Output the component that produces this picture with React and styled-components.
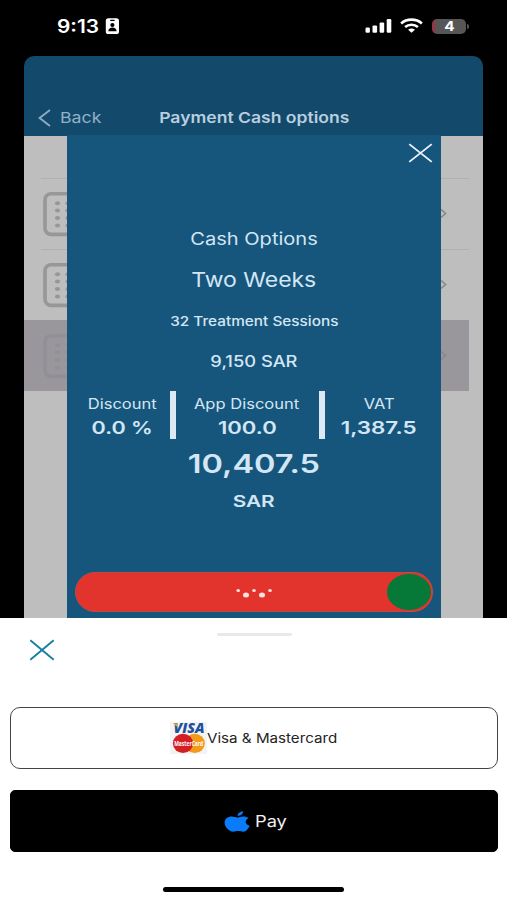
import React from "react";
import styled, { createGlobalStyle } from "styled-components";

const GlobalStyle = createGlobalStyle`
  *, *::before, *::after { box-sizing: border-box; }
  body { margin: 0; background: #000; font-family: Inter, "Liberation Sans", sans-serif; }
  button { font: inherit; border: 0; padding: 0; background: none; }
`;

const Phone = styled.div`
  width: 507px;
  height: 900px;
  overflow: hidden;
  display: flex;
  flex-direction: column;
  background: #000;
`;

const Label = styled.span`
  display: block;
  flex: none;
  white-space: nowrap;
  line-height: ${(p) => p.$line || 20}px;
  font-size: ${(p) => p.$size}px;
  font-weight: ${(p) => p.$weight || 400};
  color: ${(p) => p.$color || "#d3e6f5"};
  transform: scaleX(${(p) => p.$stretch || 1.18});
  transform-origin: ${(p) => p.$origin || "center"};
`;

const StatusBar = styled.header`
  height: 56px;
  flex: none;
  display: flex;
  justify-content: space-between;
  padding: 16px 38px 0 57px;
`;

const StatusGroup = styled.div`
  display: flex;
  align-items: center;
  height: 20px;
`;

const Clock = styled.div`
  width: 48px;
  padding-top: 1px;
`;

const Screen = styled.main`
  height: 562px;
  flex: none;
  margin: 0 24px;
  display: flex;
  flex-direction: column;
  position: relative;
`;

const NavBar = styled.nav`
  height: 80px;
  flex: none;
  display: grid;
  grid-template-columns: 135px 190px 1fr;
  padding-top: 50px;
  border-radius: 10px 10px 0 0;
  background: #134a6c;
`;

const BackButton = styled.button`
  display: flex;
  align-items: center;
  gap: 9px;
  height: 23px;
  padding-left: 14px;
`;

const NavTitle = styled.div`
  display: flex;
  justify-content: center;
  height: 22px;
`;

const List = styled.div`
  flex: 1;
  padding-top: 42px;
  background: #bebebf;
`;

const ListRow = styled.div`
  height: 71px;
  width: 445px;
  display: flex;
  align-items: center;
  justify-content: space-between;
  padding: 0 22px 0 19px;
  color: ${(p) => (p.$selected ? "#919096" : "#979799")};
  background: ${(p) =>
    p.$selected
      ? "#99979c"
      : "linear-gradient(#b1b1b3, #b1b1b3) 17px 0 / 428px 1px no-repeat"};
`;

const Modal = styled.section`
  position: absolute;
  z-index: 1;
  top: 79px;
  left: 43px;
  right: 42px;
  bottom: 0;
  display: flex;
  flex-direction: column;
  align-items: center;
  background: #17567c;
`;

const ModalClose = styled.button`
  align-self: flex-end;
  margin: 8px 8px 0 0;
  width: 25px;
  height: 20px;
  display: flex;
`;

const Summary = styled.div`
  margin-top: 66px;
  display: flex;
  flex-direction: column;
  align-items: center;
  gap: 21px;
`;

const Charges = styled.div`
  margin-top: 19px;
  width: 375px;
  display: grid;
  grid-template-columns: 103px 6px 143px 6px 109px;
  height: 48px;
`;

const Charge = styled.div`
  display: flex;
  flex-direction: column;
  align-items: center;
  padding-top: 3px;
  padding-left: ${(p) => p.$inset || 0}px;
  gap: 4px;
`;

const Divider = styled.div`
  background: #dce9f5;
`;

const Total = styled.div`
  margin-top: 9px;
  display: flex;
  flex-direction: column;
  align-items: center;
  gap: 11px;
`;

const Slider = styled.div`
  width: 358px;
  height: 40px;
  margin-top: 61px;
  display: grid;
  grid-template-columns: 311px 44px;
  align-items: center;
  border-radius: 20px / 20px;
  background: #e2342c;
  border: 1px solid #bd4a47;
`;

const Dots = styled.div`
  display: flex;
  justify-content: center;
  padding: 2px 0 0 45px;
`;

const Knob = styled.div`
  width: 44px;
  height: 36px;
  border-radius: 50%;
  background: #067837;
`;

const Sheet = styled.section`
  height: 282px;
  flex: none;
  display: flex;
  flex-direction: column;
  padding: 15px 10px 0;
  background: #fff;
`;

const Handle = styled.div`
  width: 75px;
  height: 3px;
  margin-left: 207px;
  border-radius: 2px;
  background: #e9e9ea;
`;

const SheetClose = styled.button`
  width: 26px;
  height: 22px;
  margin: 3px 0 0 19px;
  display: flex;
`;

const PayButton = styled.button`
  width: 488px;
  height: 62px;
  display: flex;
  align-items: center;
  flex: none;
  border-radius: ${(p) => (p.$dark ? "5px" : "10px")};
  background: ${(p) => (p.$dark ? "#000" : "#fff")};
  border: 1px solid ${(p) => (p.$dark ? "#000" : "#454545")};
  margin-top: ${(p) => (p.$dark ? 21 : 46)}px;
  padding-left: ${(p) => (p.$dark ? 213 : 159)}px;
  gap: ${(p) => (p.$dark ? 5 : 0)}px;
`;

const HomeIndicator = styled.div`
  width: 181px;
  height: 5px;
  margin: 35px 0 0 153px;
  border-radius: 3px;
  background: #000;
`;

const ContactIcon = () => (
  <svg width="15" height="18" viewBox="0 0 15 18">
    <rect x="0.8" y="1.2" width="13.2" height="15.8" rx="2.6" fill="#fff" />
    <rect x="5.2" y="2.7" width="4.5" height="1.2" rx=".5" fill="#000" />
    <circle cx="7.4" cy="8" r="2.1" fill="#000" />
    <path d="M3.3 14.3c0-5 8.3-5 8.3 0z" fill="#000" />
  </svg>
);

const SignalIcon = () => (
  <svg width="28" height="16" viewBox="0 0 28 16" fill="#fff">
    <rect x="0.5" y="9.6" width="4.4" height="5.2" rx="1.2" />
    <rect x="7.5" y="7.4" width="4.6" height="7.4" rx="1.2" />
    <rect x="14.6" y="4.4" width="4.6" height="10.4" rx="1.2" />
    <rect x="21.7" y="1" width="4.6" height="13.8" rx="1.2" />
  </svg>
);

const WifiIcon = () => (
  <svg width="23" height="16" viewBox="0 0 23 16" fill="none" stroke="#fff" strokeWidth="2.6">
    <path d="M1.1 5.4C6.8.4 16.2.4 21.9 5.4" />
    <path d="M5.1 9c3.5-3.1 9.3-3.1 12.8 0" />
    <path d="M8.1 11.8c1.9-1.7 4.9-1.7 6.8 0l-3.4 2.9z" fill="#fff" stroke="none" />
  </svg>
);

const Battery = styled.div`
  width: 34px;
  height: 15px;
  border-radius: 5px;
  display: flex;
  justify-content: center;
  background: linear-gradient(90deg, #933747 2.5px, #565657 2.5px);
`;

const BatteryTip = styled.div`
  width: 2px;
  height: 5px;
  margin-left: 1px;
  border-radius: 0 2px 2px 0;
  background: #565657;
`;

const Spacer = styled.div`
  width: ${(p) => p.$width}px;
  flex: none;
`;

const BackIcon = () => (
  <svg width="13" height="18" viewBox="0 0 13 18" fill="none" stroke="#8cacc2" strokeWidth="1.9">
    <path d="M12 1 1.6 9 12 17" />
  </svg>
);

const CrossIcon = ({ color }) => (
  <svg width="100%" height="100%" viewBox="0 0 26 22" preserveAspectRatio="none">
    <path d="M1.3 1.3 24.7 20.7M24.7 1.3 1.3 20.7" stroke={color} strokeWidth="1.9" />
  </svg>
);

const KeypadIcon = () => (
  <svg width="54" height="46" viewBox="0 0 54 46" fill="none">
    <rect x="2" y="2.8" width="50" height="40.6" rx="6" stroke="currentColor" strokeWidth="3.6" />
    {[14.5, 25, 35.5].map((x) =>
      [12.2, 19.6, 27, 34.6].map((y) => (
        <ellipse key={`${x}-${y}`} cx={x} cy={y} rx="2.6" ry="2" fill="currentColor" />
      ))
    )}
  </svg>
);

const ChevronIcon = () => (
  <svg width="7" height="10" viewBox="0 0 7 10" fill="none" stroke="#88888a" strokeWidth="1.6">
    <path d="m1 .5 4.6 4L1 8.5" />
  </svg>
);

const LoadingDots = () => (
  <svg width="38" height="12" viewBox="0 0 38 12" fill="#ffe4dc">
    <ellipse cx="3.2" cy="3.5" rx="1.8" ry="1.5" />
    <ellipse cx="11" cy="8" rx="3" ry="2.5" />
    <ellipse cx="19" cy="3.5" rx="1.8" ry="1.5" />
    <ellipse cx="27" cy="8" rx="3" ry="2.5" />
    <ellipse cx="35" cy="3.5" rx="1.8" ry="1.5" />
  </svg>
);

const CardLogo = () => (
  <svg width="37" height="32" viewBox="0 0 37 32" overflow="visible">
    <rect width="37" height="32" fill="#f3f3f4" />
    <text x="3.5" y="11.2" fontSize="14" fontWeight="800" fontStyle="italic" fontFamily="Open Sans, sans-serif" fill="#1d509d" textLength="31" lengthAdjust="spacingAndGlyphs">VISA</text>
    <path d="M2.8 1.2h4l1.1 4.4z" fill="#d9a53a" />
    <ellipse cx="24.7" cy="21.4" rx="10.1" ry="9.6" fill="#f49a1b" />
    <ellipse cx="13" cy="21.4" rx="10.1" ry="9.6" fill="#d51e23" />
    <text x="4.2" y="23.7" fontSize="6.2" fontWeight="700" fontFamily="Open Sans, sans-serif" fill="#fff" textLength="29" lengthAdjust="spacingAndGlyphs">MasterCard</text>
  </svg>
);

const AppleIcon = () => (
  <svg width="26" height="21" viewBox="0 0 26 21" fill="#087cfb">
    <path d="M19.2.2c.1 2.5-2.4 4.4-5.6 4.6C13.4 2.4 16 .5 19.2.2z" />
    <path d="M24.6 7.1c-4.3 2.2-3.8 6.3 1 7.7-1.4 3.2-3.7 5.9-6.2 5.9-2.2 0-2.8-.7-5.1-.7s-3.1.7-5.1.7C5.4 20.7.6 15.8.6 11.7c0-4 3.4-6.2 7-6.2 2.3 0 4.2 1 5.7 1 1.4 0 3.5-1.1 6.1-1.1 2 0 3.9.5 5.2 1.7z" />
  </svg>
);

export default function App() {
  return (
    <Phone>
      <GlobalStyle />
      <StatusBar>
        <StatusGroup>
          <Clock>
            <Label $size={18} $weight={600} $color="#fff" $origin="left" $stretch={1.16}>9:13</Label>
          </Clock>
          <ContactIcon />
        </StatusGroup>
        <StatusGroup>
          <SignalIcon />
          <Spacer $width={7} />
          <WifiIcon />
          <Spacer $width={9} />
          <Battery>
            <Label $size={13} $weight={700} $color="#fff" $line={15}>4</Label>
          </Battery>
          <BatteryTip />
        </StatusGroup>
      </StatusBar>

      <Screen>
        <NavBar>
          <BackButton>
            <BackIcon />
            <Label $size={15} $color="#92b1c7" $origin="left" $line={22}>Back</Label>
          </BackButton>
          <NavTitle>
            <Label $size={15} $weight={600} $color="#b9cfdf" $line={23} $stretch={1.17}>Payment Cash options</Label>
          </NavTitle>
        </NavBar>
        <List>
          {[0, 1, 2].map((row) => (
            <ListRow key={row} $selected={row === 2}>
              <KeypadIcon />
              <ChevronIcon />
            </ListRow>
          ))}
        </List>

        <Modal>
          <ModalClose aria-label="Close">
            <CrossIcon color="#eaf4fb" />
          </ModalClose>
          <Summary>
            <Label $size={17}>Cash Options</Label>
            <Label $size={20.5} $stretch={1.12}>Two Weeks</Label>
            <Label $size={13} $weight={500}>32 Treatment Sessions</Label>
            <Label $size={15.5} $weight={500}>9,150 SAR</Label>
          </Summary>
          <Charges>
            <Charge $inset={8}>
              <Label $size={14}>Discount</Label>
              <Label $size={17} $weight={600} $stretch={1.27}>0.0 %</Label>
            </Charge>
            <Divider />
            <Charge>
              <Label $size={14}>App Discount</Label>
              <Label $size={17.5} $weight={600} $stretch={1.26}>100.0</Label>
            </Charge>
            <Divider />
            <Charge>
              <Label $size={14}>VAT</Label>
              <Label $size={17.5} $weight={600} $stretch={1.28}>1,387.5</Label>
            </Charge>
          </Charges>
          <Total>
            <Label $size={26} $weight={600} $line={32} $stretch={1.25}>10,407.5</Label>
            <Label $size={16.5} $weight={600} $stretch={1.26}>SAR</Label>
          </Total>
          <Slider>
            <Dots>
              <LoadingDots />
            </Dots>
            <Knob />
          </Slider>
        </Modal>
      </Screen>

      <Sheet>
        <Handle />
        <SheetClose aria-label="Close">
          <CrossIcon color="#17809c" />
        </SheetClose>
        <PayButton>
          <CardLogo />
          <Label $size={13} $color="#242424" $origin="left" $stretch={1.165}>Visa &amp; Mastercard</Label>
        </PayButton>
        <PayButton $dark>
          <AppleIcon />
          <Label $size={16} $color="#f1f1f1" $origin="left" $stretch={1.14}>Pay</Label>
        </PayButton>
        <HomeIndicator />
      </Sheet>
    </Phone>
  );
}
